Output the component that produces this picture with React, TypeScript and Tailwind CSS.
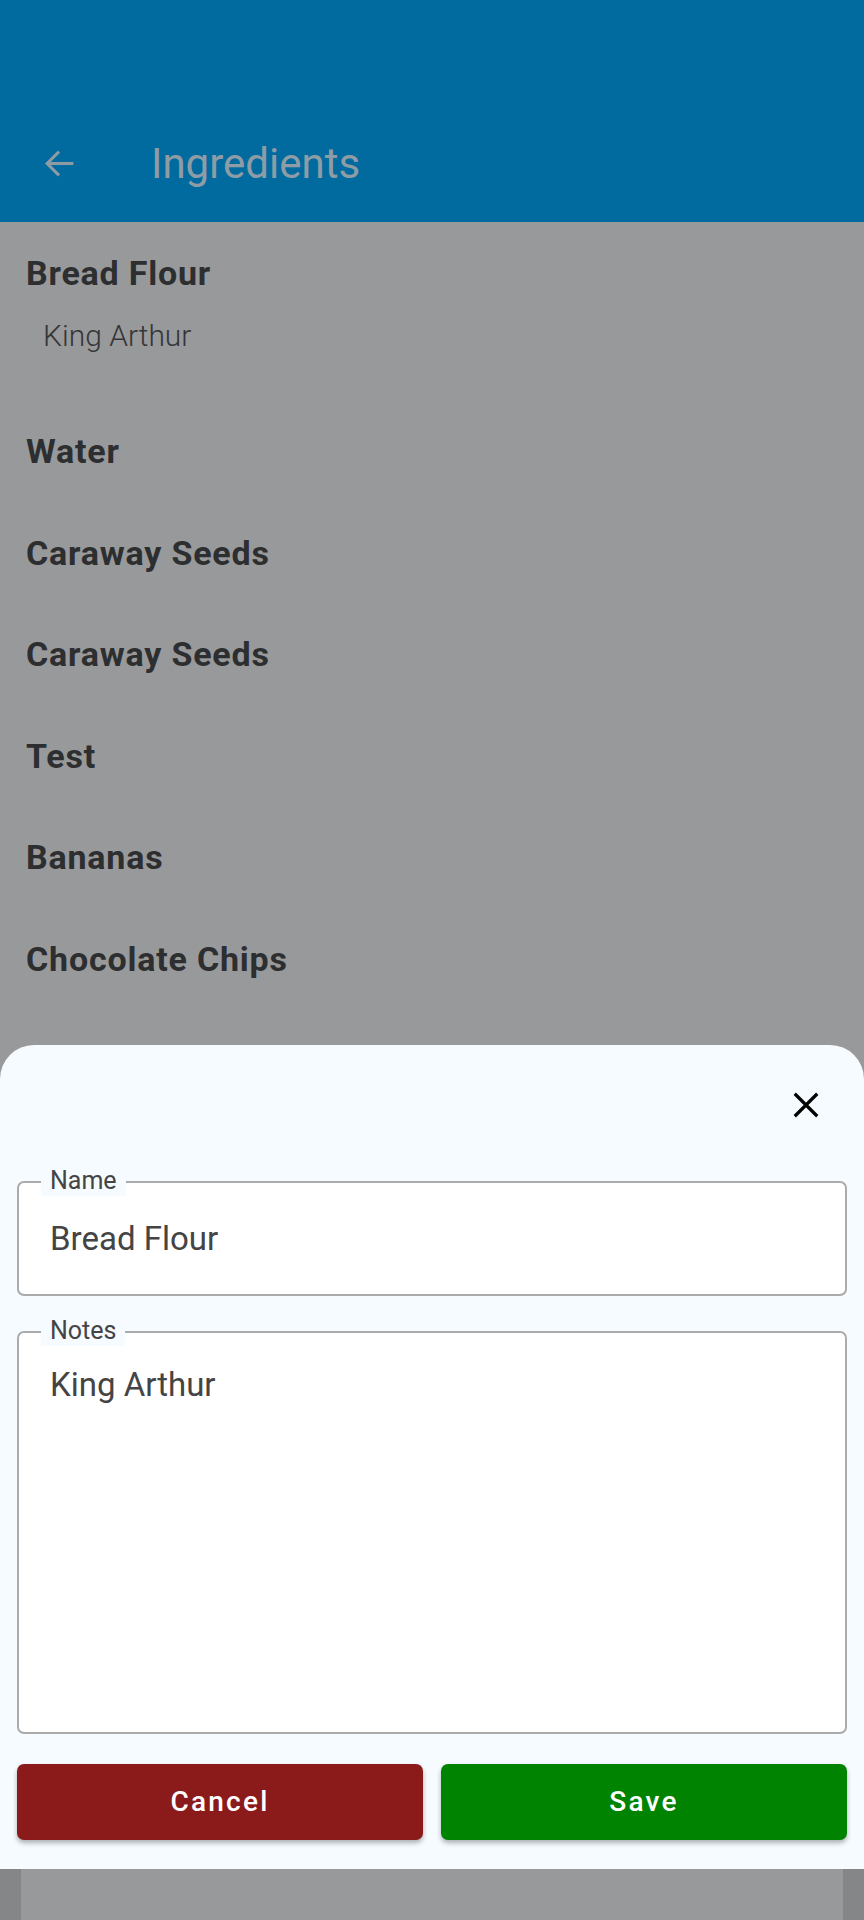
import React from 'react';

const ingredients = [
  { name: 'Bread Flour', notes: 'King Arthur' },
  { name: 'Water' },
  { name: 'Caraway Seeds' },
  { name: 'Caraway Seeds' },
  { name: 'Test' },
  { name: 'Bananas' },
  { name: 'Chocolate Chips' },
];

function OutlinedField({ label, value, tall }: { label: string; value: string; tall?: boolean }) {
  return (
    <div
      className={`relative rounded-[7px] border-2 border-[#ababab] bg-white ${
        tall ? 'h-[403px]' : 'h-[115px]'
      }`}
    >
      {/* floating label sits on the border */}
      <span className="absolute -top-[17px] left-[22px] bg-[#f5fbff] px-[9px] text-[25px] leading-[30px] text-[#444]">
        {label}
      </span>
      <div
        className={`px-[31px] text-[33px] text-[#444] ${tall ? 'pt-[27px]' : 'flex h-full items-center'}`}
      >
        {value}
      </div>
    </div>
  );
}

export default function App() {
  return (
    <div
      className="relative flex h-[1920px] w-[864px] flex-col overflow-hidden bg-[#98999b]"
      style={{ fontFamily: 'Roboto, "Noto Sans", sans-serif' }}
    >
      {/* Status bar */}
      <div className="h-[103px] bg-[#016b9f]" />
      <div className="h-[2px] bg-[#01689a]" />

      {/* Toolbar */}
      <div className="flex h-[117px] items-center bg-[#016b9f]">
        <svg
          className="ml-[41px] h-[37px] w-[37px]"
          viewBox="0 0 24 24"
          fill="none"
          stroke="#8c9ba4"
          strokeWidth="2"
          strokeLinecap="square"
        >
          <path d="M20 12H5" />
          <path d="M11 5l-7 7 7 7" />
        </svg>
        <h1 className="ml-[73px] text-[42px] leading-none text-[#8e9ca5]">Ingredients</h1>
      </div>

      {/* List */}
      <div className="flex flex-col pt-[16px]">
        {ingredients.map((item, i) => (
          <div
            key={i}
            className={`flex flex-col px-[26px] ${item.notes ? 'h-[178px]' : 'h-[101.6px]'}`}
          >
            <div className="pt-[10px] text-[34px] font-bold tracking-[0.8px] text-[#2d2e2f]">
              {item.name}
            </div>
            {item.notes && (
              <div className="mt-[14px] pl-[17px] text-[30px] font-light text-[#353637]">
                {item.notes}
              </div>
            )}
          </div>
        ))}
      </div>

      {/* Bottom sheet */}
      <div className="absolute bottom-0 left-0 right-0 flex flex-col">
        <div className="rounded-t-[34px] bg-[#f5fbff] px-[17px] pb-[29px]">
          <div className="flex h-[136px] items-start justify-end pr-[26px] pt-[45px]">
            <svg
              className="h-[30px] w-[30px]"
              viewBox="0 0 24 24"
              fill="none"
              stroke="#000"
              strokeWidth="2.6"
            >
              <path d="M3 3l18 18M21 3L3 21" />
            </svg>
          </div>
          <OutlinedField label="Name" value="Bread Flour" />
          <div className="h-[35px]" />
          <OutlinedField label="Notes" value="King Arthur" tall />
          <div className="mt-[30px] flex gap-[18px]">
            <button className="h-[76px] flex-1 rounded-[7px] bg-[#8b1a1a] text-[28px] font-medium tracking-[0.08em] text-white shadow-[0_3px_5px_rgba(0,0,0,0.3)]">
              Cancel
            </button>
            <button className="h-[76px] flex-1 rounded-[7px] bg-[#008300] text-[28px] font-medium tracking-[0.08em] text-white shadow-[0_3px_5px_rgba(0,0,0,0.3)]">
              Save
            </button>
          </div>
        </div>
        <div className="flex h-[51px]">
          <div className="w-[21px] bg-[#858688]" />
          <div className="flex-1 bg-[#98999b]" />
          <div className="w-[21px] bg-[#858688]" />
        </div>
      </div>
    </div>
  );
}
